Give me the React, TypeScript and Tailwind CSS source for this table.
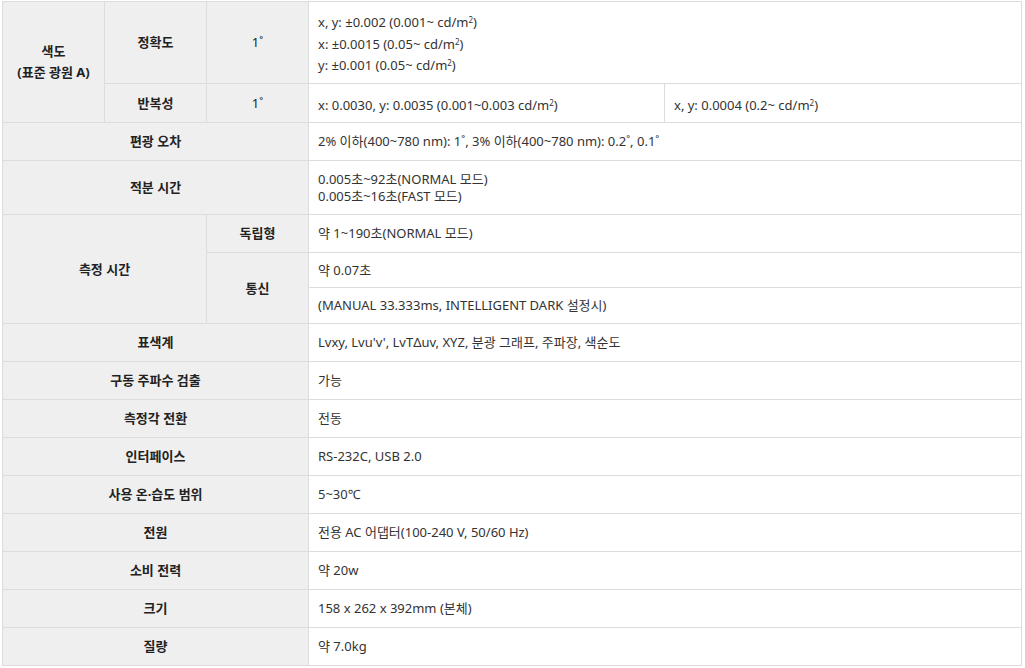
import React from "react";

const th =
  "border border-[#dcdcdc] bg-[#efefef] text-center align-middle font-bold text-[#222] p-0";
const td =
  "border border-[#dcdcdc] bg-white text-left align-middle pl-[9px] pr-2 text-[#333] p-0";

function M2() {
  return (
    <>
      m<sup className="text-[8px]">2</sup>
    </>
  );
}

function SimpleRow({ label, value }: { label: string; value: React.ReactNode }) {
  return (
    <tr className="h-[38px]">
      <th colSpan={3} className={th}>
        {label}
      </th>
      <td colSpan={2} className={td}>
        {value}
      </td>
    </tr>
  );
}

export default function App() {
  return (
    <div
      className="bg-white pt-px pl-[2px] w-[1025px] h-[668px] overflow-hidden text-[13px] leading-[17px]"
      style={{ fontFamily: '"Noto Sans", "Noto Sans CJK KR", sans-serif' }}
    >
      <table className="table-fixed border-collapse w-[1020px]">
        <colgroup>
          <col className="w-[102px]" />
          <col className="w-[102px]" />
          <col className="w-[102px]" />
          <col className="w-[356px]" />
          <col />
        </colgroup>
        <tbody>
          <tr className="h-[82px]">
            <th rowSpan={2} className={th + " leading-[21px]"}>
              색도
              <br />
              (표준 광원 A)
            </th>
            <th className={th}>정확도</th>
            <th className={th + " font-normal"}>1˚</th>
            <td colSpan={2} className={td + " leading-[21.5px] pt-1"}>
              x, y: ±0.002 (0.001~ cd/<M2 />)
              <br />
              x: ±0.0015 (0.05~ cd/<M2 />)
              <br />
              y: ±0.001 (0.05~ cd/<M2 />)
            </td>
          </tr>
          <tr className="h-[39px]">
            <th className={th}>반복성</th>
            <th className={th + " font-normal"}>1˚</th>
            <td className={td + " pt-1"}>
              x: 0.0030, y: 0.0035 (0.001~0.003 cd/<M2 />)
            </td>
            <td className={td + " pt-1"}>
              x, y: 0.0004 (0.2~ cd/<M2 />)
            </td>
          </tr>
          <SimpleRow
            label="편광 오차"
            value="2% 이하(400~780 nm): 1˚, 3% 이하(400~780 nm): 0.2˚, 0.1˚"
          />
          <tr className="h-[54px]">
            <th colSpan={3} className={th}>
              적분 시간
            </th>
            <td colSpan={2} className={td}>
              0.005초~92초(NORMAL 모드)
              <br />
              0.005초~16초(FAST 모드)
            </td>
          </tr>
          <tr className="h-[38px]">
            <th colSpan={2} rowSpan={3} className={th}>
              측정 시간
            </th>
            <th className={th}>독립형</th>
            <td colSpan={2} className={td}>
              약 1~190초(NORMAL 모드)
            </td>
          </tr>
          <tr className="h-[35px]">
            <th rowSpan={2} className={th}>
              통신
            </th>
            <td colSpan={2} className={td}>
              약 0.07초
            </td>
          </tr>
          <tr className="h-[36px]">
            <td colSpan={2} className={td}>
              (MANUAL 33.333ms, INTELLIGENT DARK 설정시)
            </td>
          </tr>
          <SimpleRow label="표색계" value="Lvxy, Lvu'v', LvTΔuv, XYZ, 분광 그래프, 주파장, 색순도" />
          <SimpleRow label="구동 주파수 검출" value="가능" />
          <SimpleRow label="측정각 전환" value="전동" />
          <SimpleRow label="인터페이스" value="RS-232C, USB 2.0" />
          <SimpleRow label="사용 온·습도 범위" value="5~30℃" />
          <SimpleRow label="전원" value="전용 AC 어댑터(100-240 V, 50/60 Hz)" />
          <SimpleRow label="소비 전력" value="약 20w" />
          <SimpleRow label="크기" value="158 x 262 x 392mm (본체)" />
          <SimpleRow label="질량" value="약 7.0kg" />
        </tbody>
      </table>
    </div>
  );
}
